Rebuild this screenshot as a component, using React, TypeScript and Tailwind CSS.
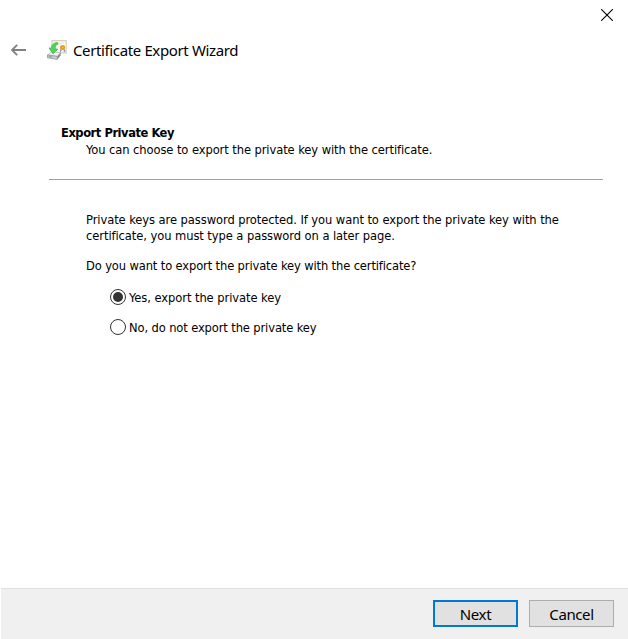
import { useState } from "react";

const options = [
  { id: "yes", label: "Yes, export the private key", tracking: "tracking-[-0.06px]" },
  { id: "no", label: "No, do not export the private key", tracking: "tracking-[-0.12px]" },
];

const BackIcon = () => (
  <svg width="16" height="12" viewBox="0 0 16 12" fill="none" stroke="#808080" strokeWidth="1.8">
    <path d="M15 6H1M6.2 0.9L1 6l5.2 5.1" />
  </svg>
);

const CloseIcon = () => (
  <svg width="12" height="12" viewBox="0 0 12 12" stroke="#000" strokeWidth="1.1">
    <path d="M0.2 0.2l11.6 11.6M11.8 0.2L0.2 11.8" />
  </svg>
);

const CertificateIcon = () => (
  <svg width="20" height="20" viewBox="0 0 20 20">
    <path d="M5 0.6h14.2v12.2h-14.2z" fill="#fbfaf6" stroke="#d8cfb8" strokeWidth="1.2" />
    <path d="M11.5 3.2h5.5M12 5h1.5" stroke="#dde5ec" strokeWidth="0.8" />
    <path d="M13.8 8.5l-1 3.4 1.8-.6zM17 8.5l1.6 3.2-2-.3z" fill="#4b86cf" />
    <circle cx="15.6" cy="7.4" r="2.5" fill="#e5961c" />
    <circle cx="15.6" cy="7.4" r="1" fill="#f5bb4d" />
    <path d="M0.5 15l4-3.2 9 .8-3.2 3.8z" fill="#eef0f1" stroke="#b0b4b6" strokeWidth="0.7" />
    <path d="M0.5 15l9.8 1.4v3l-9.8-1.6z" fill="#d0d3d5" stroke="#85898c" strokeWidth="0.7" />
    <path d="M10.3 16.4l3.3-3.8v2.8l-3.3 4z" fill="#85898c" />
    <path d="M1.8 16.6l3.5.5" stroke="#6b7073" strokeWidth="0.7" />
    <path d="M10.4 2.4C6.8 2.5 4.5 4.9 4.4 8.2L2 7.9l3.9 5.9L10.9 9.2l-2.7-.4C8 6.3 9 4.7 11.2 4z" fill="#4fd45a" stroke="#32ab40" strokeWidth="0.6" />
  </svg>
);

const App = () => {
  const [selected, setSelected] = useState("yes");

  return (
    <div className="flex h-[639px] w-[628px] flex-col overflow-hidden bg-white font-['DejaVu_Sans_Condensed','DejaVu_Sans',sans-serif] text-[12.8px] leading-4 text-black [font-stretch:condensed]">
      <div className="flex h-[30px] justify-end pt-[9px] pr-[15px]">
        <button className="h-3" aria-label="Close">
          <CloseIcon />
        </button>
      </div>
      <header className="flex h-10 items-center pl-[11px]">
        <button aria-label="Back">
          <BackIcon />
        </button>
        <div className="ml-5">
          <CertificateIcon />
        </div>
        <h1 className="ml-[6px] font-['Noto_Sans',sans-serif] text-[15px] leading-5 tracking-[-0.37px] whitespace-nowrap [font-stretch:normal]">
          Certificate Export Wizard
        </h1>
      </header>

      <main className="flex-1 whitespace-nowrap">
        <div className="mr-[25px] ml-[49px] h-[110px] border-b border-[#a0a0a0] pt-[55px] pl-3">
          <h2 className="font-bold tracking-[-0.46px]">Export Private Key</h2>
          <p className="mt-px pl-[25px] tracking-[-0.08px]">
            You can choose to export the private key with the certificate.
          </p>
        </div>
        <div className="pt-8 pl-[86px]">
          <p className="tracking-[-0.07px]">
            Private keys are password protected. If you want to export the private key with the
          </p>
          <p className="tracking-[-0.07px]">certificate, you must type a password on a later page.</p>
          <p className="mt-[14px] tracking-[-0.13px]">
            Do you want to export the private key with the certificate?
          </p>
          <div className="mt-[15px] flex flex-col gap-[14px] pl-6">
            {options.map((option) => (
              <label key={option.id} className="flex h-4 items-center">
                <input
                  type="radio"
                  name="export"
                  className="sr-only"
                  checked={selected === option.id}
                  onChange={() => setSelected(option.id)}
                />
                <span className="flex size-4 items-center justify-center rounded-full border border-[#333]">
                  {selected === option.id && <span className="size-[10px] rounded-full bg-[#333]" />}
                </span>
                <span className={`mt-0.5 ml-[3px] ${option.tracking}`}>{option.label}</span>
              </label>
            ))}
          </div>
        </div>
      </main>

      <footer className="ml-px flex h-[51px] justify-end gap-[11px] border-t border-[#dfdfdf] bg-[#f0f0f0] pt-[11px] pr-[14px] font-['Noto_Sans',sans-serif] text-[15px] leading-5 tracking-[-0.4px] [font-stretch:normal]">
        <button className="h-[27px] w-[85px] border-2 border-[#0078d7] bg-[#e1e1e1]">Next</button>
        <button className="h-[27px] w-[85px] border border-[#adadad] bg-[#e1e1e1]">Cancel</button>
      </footer>
    </div>
  );
};

export default App;
